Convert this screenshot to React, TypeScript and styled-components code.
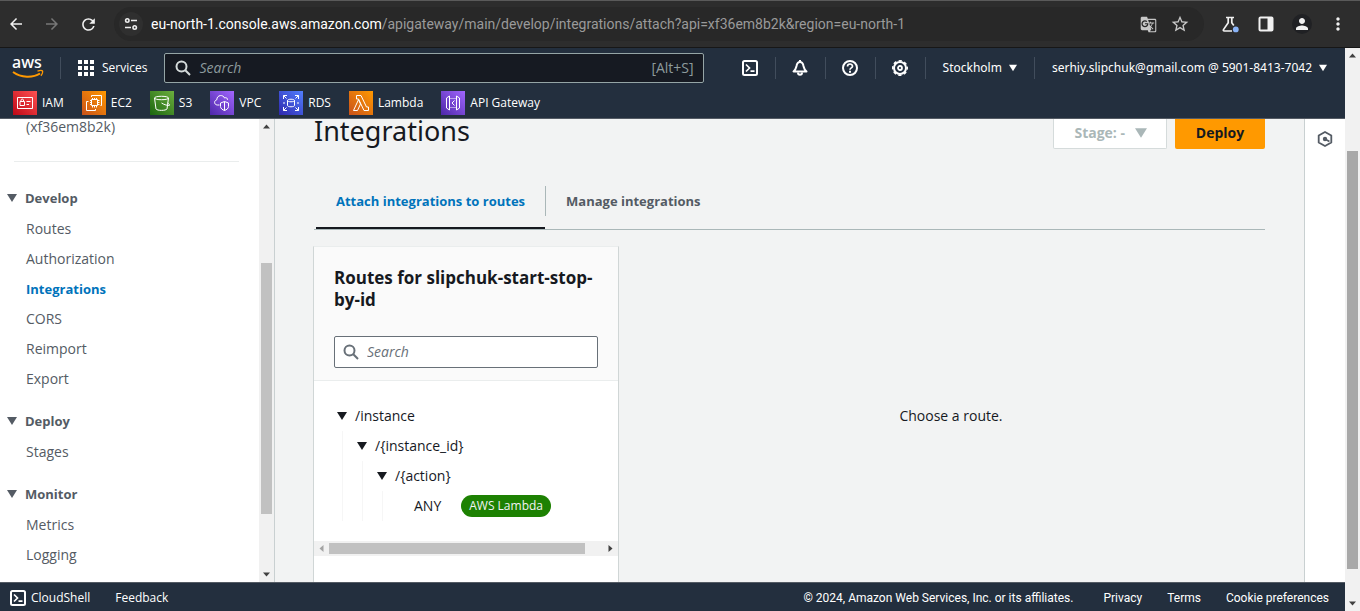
import React from "react";
import styled, { createGlobalStyle } from "styled-components";
import {
  MdArrowBack,
  MdArrowForward,
  MdGTranslate,
  MdMoreVert,
  MdPerson,
  MdRefresh,
  MdStarOutline,
} from "react-icons/md";

const Global = createGlobalStyle`
  * { box-sizing: border-box; }
  body {
    margin: 0;
    font-family: "Open Sans", "Noto Sans", sans-serif;
    font-size: 14px;
    line-height: 20px;
    color: #16191f;
    background: #f2f3f3;
  }
  button, input { font: inherit; color: inherit; }
  button { border: 0; padding: 0; background: none; cursor: pointer; }
  a { color: inherit; text-decoration: none; }
  h1, h2, h3, ul { margin: 0; padding: 0; font-size: inherit; }
  ul { list-style: none; }
  svg { display: block; flex: none; }
`;

const Screen = styled.div`
  display: flex;
  flex-direction: column;
  height: 100vh;
  overflow: hidden;
`;

/* Browser bar */

const BrowserBar = styled.div`
  display: flex;
  align-items: center;
  height: 48px;
  flex: none;
  padding: 0 12px 0 6px;
  background: #2d2d2d;
  border-top: 1px solid #5a5a5a;
  border-bottom: 1px solid #171717;
  color: #f1f1f1;
`;

const NavButtons = styled.div`
  display: flex;
  gap: 16px;
  margin-right: 16px;
`;

const BarButton = styled.button<{ $muted?: boolean; $round?: boolean }>`
  display: flex;
  align-items: center;
  justify-content: center;
  width: 20px;
  height: 20px;
  border-radius: 10px;
  color: ${(p) => (p.$muted ? "#777" : "#f1f1f1")};
  background: ${(p) => (p.$round ? "#202124" : "none")};
`;

const AddressBar = styled.div`
  display: flex;
  align-items: center;
  flex: 1;
  min-width: 0;
  height: 34px;
  padding: 0 14px 0 5px;
  border-radius: 17px;
  background: #282828;
`;

const SiteInfo = styled.button`
  display: flex;
  align-items: center;
  justify-content: center;
  width: 24px;
  height: 24px;
  margin-right: 8px;
  border-radius: 12px;
  background: #2f2f2f;
`;

const Url = styled.div`
  flex: 1;
  overflow: hidden;
  white-space: nowrap;
  color: #9a9a9a;
  font-family: Roboto, "Noto Sans", sans-serif;
  outline: 0;
  b { font-weight: 400; color: #fff; }
`;

const AddressActions = styled.div`
  display: flex;
  gap: 12px;
  color: #c7c7c7;
`;

const BarActions = styled.div`
  display: flex;
  gap: 16px;
  margin-left: 16px;
`;

/* Frame */

const Viewport = styled.div`
  display: flex;
  flex: 1;
  min-height: 0;
`;

const Console = styled.div`
  display: flex;
  flex-direction: column;
  flex: 1;
  min-width: 0;
`;

const Header = styled.header`
  flex: none;
  background: #232f3e;
  border-bottom: 1px solid #545b64;
  color: #fff;
  font-size: 12px;
`;

const HeaderRow = styled.div`
  display: flex;
  align-items: center;
  height: 40px;
  padding: 0 18px 0 12px;
`;

const LogoLink = styled.a`
  display: block;
  padding-right: 16px;
`;

const ServicesButton = styled.button`
  display: flex;
  align-items: center;
  gap: 8px;
  height: 22px;
  margin-right: 17px;
  padding-left: 17px;
  border-left: 1px solid #414d5c;
`;

const HeaderSearch = styled.label`
  display: flex;
  align-items: center;
  flex: 1;
  height: 30px;
  margin-right: 21px;
  padding: 0 9px 0 10px;
  border: 1px solid #95a5a6;
  border-radius: 2px;
  background: #161a22;
  color: #8d9a9d;
  font-size: 14px;
`;

const SearchInput = styled.input`
  flex: 1;
  width: 100%;
  min-width: 0;
  height: 20px;
  margin-left: 8px;
  padding: 0;
  border: 0;
  outline: 0;
  background: transparent;
  &::placeholder { color: inherit; opacity: 1; font-style: italic; }
`;

const HeaderIcon = styled.button<{ $first?: boolean }>`
  display: flex;
  align-items: center;
  justify-content: center;
  width: 50px;
  height: 22px;
  border-left: ${(p) => (p.$first ? "0" : "1px solid #414d5c")};
`;

const HeaderMenu = styled.button`
  display: flex;
  align-items: center;
  gap: 7px;
  height: 22px;
  padding: 0 0 0 17px;
  white-space: nowrap;
  font-family: "Noto Sans", sans-serif;
  border-left: 1px solid #414d5c;
  & + & { margin-left: 17px; }
`;

const Favorites = styled.nav`
  display: flex;
  align-items: center;
  gap: 18px;
  height: 30px;
  padding: 0 13px;
`;

const Favorite = styled.a`
  display: flex;
  align-items: center;
  gap: 5px;
`;

const Tile = styled.span<{ $from: string; $to: string }>`
  display: block;
  width: 24px;
  height: 24px;
  background: linear-gradient(45deg, ${(p) => p.$from}, ${(p) => p.$to});
`;

const Body = styled.div`
  display: flex;
  flex: 1;
  min-height: 0;
  overflow: hidden;
`;

/* Sidebar */

const Sidebar = styled.aside`
  display: flex;
  flex: none;
  width: 275px;
  background: #fff;
  border-right: 1px solid #c9d0d1;
  overflow: hidden;
`;

const SideContent = styled.nav`
  flex: 1;
  color: #545b64;
`;

const ApiId = styled.div`
  height: 42px;
  line-height: 16px;
  padding-left: 26px;
`;

const Divider = styled.hr`
  height: 1px;
  margin: 0 20px 26px 14px;
  border: 0;
  background: #eaeded;
`;

const SectionTitle = styled.button`
  display: flex;
  align-items: center;
  gap: 8px;
  height: 20px;
  margin-bottom: 6px;
  padding-left: 7px;
  font-size: 13px;
  font-weight: 700;
`;

const SectionList = styled.ul`
  margin-bottom: 17px;
`;

const SideLink = styled.a<{ $active?: boolean }>`
  display: block;
  padding-left: 26px;
  font-size: ${(p) => (p.$active ? 13 : 14)}px;
  line-height: 30px;
  font-weight: ${(p) => (p.$active ? 700 : 400)};
  color: ${(p) => (p.$active ? "#0073bb" : "#545b64")};
`;

/* Main area */

const Main = styled.main`
  display: flex;
  flex-direction: column;
  flex: 1;
  min-width: 0;
  padding: 0 39px 0 38px;
`;

const TitleRow = styled.div`
  display: flex;
  flex: none;
  gap: 8px;
  height: 30px;
  padding-left: 1px;
`;

const Title = styled.h1`
  flex: 1;
  font-family: "Noto Sans", sans-serif;
  font-size: 27px;
  line-height: 24px;
  font-weight: 400;
`;

const StageButton = styled.button`
  display: flex;
  align-items: center;
  gap: 10px;
  padding: 0 19px 2px 20px;
  border: 1px solid #d5dbdb;
  border-top: 0;
  border-radius: 0 0 2px 2px;
  background: #fff;
  color: #aab7b8;
  font-size: 14px;
  font-weight: 700;
`;

const DeployButton = styled.button`
  width: 90px;
  padding-bottom: 2px;
  border-radius: 0 0 2px 2px;
  background: #ff9900;
  font-size: 14px;
  font-weight: 700;
`;

const Tabs = styled.div`
  display: flex;
  align-items: flex-start;
  flex: none;
  height: 45px;
  margin: 36px 0 16px 1px;
  padding-left: 2px;
  border-bottom: 1px solid #aab7b8;
`;

const Tab = styled.button<{ $active?: boolean }>`
  height: 44px;
  padding: 0 20px 10px;
  font-size: 13px;
  font-weight: 700;
  color: ${(p) => (p.$active ? "#0073bb" : "#545b64")};
  border-bottom: 2px solid ${(p) => (p.$active ? "#16191f" : "transparent")};
`;

const TabRule = styled.span`
  width: 1px;
  height: 30px;
  margin-top: 1px;
  background: #aab7b8;
`;

const Columns = styled.div`
  display: flex;
  flex: 1;
  gap: 18px;
  min-height: 0;
`;

const Card = styled.section`
  flex: none;
  width: 306px;
  border: 1px solid #d0d6d6;
  border-top-color: #eaeded;
  border-bottom: 0;
  background: #fff;
`;

const CardHeader = styled.div`
  padding: 20px 20px 12px;
  background: #fafafa;
  border-bottom: 1px solid #eaeded;
`;

const CardTitle = styled.h2`
  font-size: 17px;
  line-height: 22px;
  font-weight: 700;
  margin-bottom: 25px;
`;

const RouteSearch = styled.label`
  display: flex;
  align-items: center;
  height: 32px;
  padding: 0 8px;
  border: 1px solid #687078;
  border-radius: 2px;
  background: #fff;
  color: #687078;
  font-size: 14px;
`;

const Tree = styled.div`
  padding: 20px;
`;

const Branch = styled.ul<{ $nested?: boolean }>`
  margin-left: ${(p) => (p.$nested ? 5 : 0)}px;
  padding-left: ${(p) => (p.$nested ? 14 : 3)}px;
  border-left: ${(p) => (p.$nested ? "1px solid #f6f6f6" : "0")};
`;

const Node = styled.button`
  display: flex;
  align-items: center;
  gap: 8px;
  height: 30px;
`;

const Method = styled.a`
  display: flex;
  align-items: center;
  gap: 20px;
  height: 30px;
  padding-left: 17px;
`;

const Badge = styled.span`
  padding: 0 8px;
  border-radius: 11px;
  line-height: 22px;
  background: #1d8102;
  color: #f2f3f3;
  font-size: 12px;
`;

const Placeholder = styled.p`
  flex: 1;
  margin: 0;
  padding-top: 160px;
  text-align: center;
`;

const ToolsPanel = styled.aside`
  display: flex;
  flex-direction: column;
  align-items: center;
  width: 41px;
  padding-top: 12px;
  background: #fff;
  border-left: 1px solid #c9d0d1;
  color: #545b64;
`;

/* Footer */

const Footer = styled.footer`
  display: flex;
  align-items: center;
  justify-content: space-between;
  flex: none;
  height: 29px;
  padding: 2px 16px 0 10px;
  background: #232f3e;
  border-top: 1px solid #545b64;
  color: #fff;
  font-size: 12px;
  white-space: nowrap;
`;

const FooterGroup = styled.div<{ $legal?: boolean }>`
  display: flex;
  align-items: center;
  gap: 25px;
  font-family: ${(p) => (p.$legal ? 'Roboto, "Noto Sans", sans-serif' : "inherit")};
`;

const ShellButton = styled.button`
  display: flex;
  align-items: center;
  gap: 5px;
`;

const Legal = styled.span`
  padding-right: 5px;
`;

/* Scroll bars */

const BarTrack = styled.div<{ $horizontal?: boolean }>`
  display: flex;
  flex-direction: ${(p) => (p.$horizontal ? "row" : "column")};
  flex: none;
  width: ${(p) => (p.$horizontal ? "auto" : "15px")};
  height: ${(p) => (p.$horizontal ? "15px" : "auto")};
  background: #f1f1f1;
`;

const BarArrow = styled.span<{ $dim?: boolean }>`
  display: flex;
  align-items: center;
  justify-content: center;
  flex: none;
  width: 15px;
  height: 15px;
  color: ${(p) => (p.$dim ? "#a3a3a3" : "#404040")};
`;

const BarSpace = styled.span<{ $size: number }>`
  flex: ${(p) => p.$size} 1 0;
`;

const BarThumb = styled.span<{ $size: number; $horizontal?: boolean; $dark?: boolean }>`
  flex: ${(p) => p.$size} 1 0;
  margin: ${(p) => (p.$horizontal ? "2px 0" : "0 2px")};
  background: ${(p) => (p.$dark ? "#a8a8a8" : "#c1c1c1")};
`;

type ScrollProps = {
  before: number;
  thumb: number;
  after: number;
  horizontal?: boolean;
  dark?: boolean;
};

function ScrollBar({ before, thumb, after, horizontal, dark }: ScrollProps) {
  return (
    <BarTrack $horizontal={horizontal} aria-hidden="true">
      <BarArrow $dim={before === 0}>
        <svg width="7" height="7" viewBox="0 0 7 7" fill="currentColor">
          <path d={horizontal ? "M5.500 0v7L1.500 3.500z" : "M0 5.500h7L3.500 1.500z"} />
        </svg>
      </BarArrow>
      <BarSpace $size={before} />
      <BarThumb $size={thumb} $horizontal={horizontal} $dark={dark} />
      <BarSpace $size={after} />
      <BarArrow>
        <svg width="7" height="7" viewBox="0 0 7 7" fill="currentColor">
          <path d={horizontal ? "M1.500 0v7l4-3.500z" : "M0 1.500h7L3.500 5.500z"} />
        </svg>
      </BarArrow>
    </BarTrack>
  );
}

/* Icons */

const Caret = ({ size = 10 }: { size?: number }) => (
  <svg width={size} height={size} viewBox="0 0 10 10" fill="currentColor">
    <path d="M0 1h10L5 9z" />
  </svg>
);

const Magnifier = ({ color }: { color: string }) => (
  <svg width="16" height="16" viewBox="0 0 16 16" fill="none" stroke={color} strokeWidth="2">
    <circle cx="6.500" cy="6.500" r="5" />
    <path d="M10.300 10.300 15 15" />
  </svg>
);

const AwsLogo = () => (
  <svg width="32" height="34" viewBox="0 -5 32 34">
    <text x="0" y="12" fontSize="16" fontFamily="Noto Sans, sans-serif" fontWeight="500" fill="#fff">aws</text>
    <path d="M1 16c8 6 20 6 27 1.500" fill="none" stroke="#f90" strokeWidth="2" />
    <path d="M25.500 15.200c2-.8 4.500-.9 5-.2s-.2 3.300-1.600 4.800" fill="none" stroke="#f90" strokeWidth="1.300" />
  </svg>
);

const Grid = () => (
  <svg width="16" height="16" viewBox="0 0 16 16" fill="#fff">
    {[0, 6, 12].map((y) =>
      [0, 6, 12].map((x) => <rect key={`${x}-${y}`} x={x} y={y} width="4" height="4" />)
    )}
  </svg>
);

const Terminal = () => (
  <svg width="16" height="16" viewBox="0 0 16 16" fill="none" stroke="#fff" strokeWidth="2">
    <rect x="1" y="1" width="14" height="14" rx="1.500" />
    <path d="m4 4.500 3.500 3.500L4 11.500M8.500 11.200h4" strokeWidth="1.700" />
  </svg>
);

const Bell = () => (
  <svg width="16" height="16" viewBox="0 0 16 16" fill="none" stroke="#fff" strokeWidth="2" strokeLinejoin="round">
    <path d="M1.500 11.500h13C12 9.500 12 8 11.500 6 11 3.200 10 2 8 2S5 3.200 4.500 6C4 8 4 9.500 1.500 11.500z" />
    <path d="M8 0v2" />
    <path d="M6 12.500c0 3 4 3 4 0" />
  </svg>
);

const Help = () => (
  <svg width="16" height="16" viewBox="0 0 16 16" fill="none" stroke="#fff" strokeWidth="2">
    <circle cx="8" cy="8" r="7" />
    <path d="M5.500 6.500C5.500 3.200 10.500 3.300 10.500 6.200 10.500 7.900 8 7.800 8 9.700" strokeWidth="1.700" />
    <path d="M8 10.800v2" />
  </svg>
);

const Gear = () => (
  <svg width="16" height="16" viewBox="0 0 16 16" fill="none" stroke="#fff">
    <circle cx="8" cy="8" r="6" strokeWidth="2" />
    <circle cx="8" cy="8" r="7.300" strokeWidth="1.400" strokeDasharray="3.300 2.433" strokeDashoffset="1.600" />
    <circle cx="8" cy="8" r="2" strokeWidth="1.800" />
  </svg>
);

const Hexagon = () => (
  <svg width="16" height="16" viewBox="0 0 16 16" fill="none" stroke="currentColor" strokeWidth="1.800">
    <path d="M8 1 14.300 4.500v7L8 15 1.700 11.500v-7z" strokeLinejoin="round" />
    <circle cx="8" cy="8" r="2.200" fill="currentColor" stroke="none" />
    <path d="m8 8 4.400 2.500" strokeWidth="1.800" />
  </svg>
);

const Tune = () => (
  <svg width="14" height="14" viewBox="0 0 14 14" fill="none" stroke="#eee" strokeWidth="1.600">
    <circle cx="3.300" cy="3.500" r="1.700" />
    <path d="M7 3.500h6M1 10.500h6" />
    <circle cx="10.700" cy="10.500" r="1.700" />
  </svg>
);

const Flask = () => (
  <svg width="18" height="18" viewBox="0 0 18 18" fill="none" stroke="#f1f1f1" strokeWidth="1.700">
    <path d="M5 2.500h8M7.200 2.500v5.300L2.500 14.600q-.6 1.400.8 1.400H11M10.800 2.500v5.300l2 2.600" />
    <circle cx="14.800" cy="14.400" r="2.900" fill="#8ab4f8" stroke="none" />
  </svg>
);

const SidePanel = () => (
  <svg width="16" height="16" viewBox="0 0 16 16">
    <rect x="1.500" y="1.500" width="13" height="13" rx="1" fill="none" stroke="#f1f1f1" strokeWidth="2" />
    <path d="M9.500 2h5v12h-5z" fill="#f1f1f1" />
  </svg>
);

const services = [
  {
    name: "IAM", from: "#bd0816", to: "#ff5252",
    art: <path d="M4.500 6.500h15v11h-15zM7 10.500h4.500v4H7zM8 10.500V9a1.300 1.300 0 0 1 2.500 0v1.500M13.500 10.500h4M13.500 13.500h2.500" />,
  },
  {
    name: "EC2", from: "#c8511b", to: "#ff9900",
    art: <path d="M9.500 8.500h6v6h-6zM10.500 7v1M12.500 7v1M14.500 7v1M10.500 15v1.500M12.500 15v1.500M14.500 15v1.500M8 9.500h1M8 11.500h1M8 13.500h1M16 9.500h1.500M16 11.500h1.500M16 13.500h1.500M9.500 6V4.500h10v10H18.500M6.500 10.500h-2v9h9V18" />,
  },
  {
    name: "S3", from: "#1b660f", to: "#6cae3e",
    art: <path d="M4.500 7c0-2.300 14-2.300 14 0s-14 2.300-14 0zl1.500 11c1 1.800 10 1.800 11 0l1.500-11M11.500 12c2 1.500 7 3 8 2.300.5-.7-.7-1.500-2-2.300" />,
  },
  {
    name: "VPC", from: "#4d27a8", to: "#a166ff",
    art: <path d="M9.500 14H7.300c-3.500-.3-3.500-4.500-.5-5.200C6.800 3.500 13.500 3.500 14.500 7c2-1 3 .4 3 1.800M14.500 10.500l4 1.500v3.500c0 2-2 3.300-4 4-2-.7-4-2-4-4V12zM14.500 10.500v9" />,
  },
  {
    name: "RDS", from: "#2e27ad", to: "#527fff",
    art: <path d="M8.500 9.500c0-1.700 7-1.700 7 0s-7 1.700-7 0zv5c0 1.700 7 1.700 7 0v-5M4.500 8V4.500H8M4.500 4.500l3 3M16 4.500h3.500V8M19.500 4.500l-3 3M4.500 16v3.500H8M4.500 19.500l3-3M16 19.500h3.500V16M19.500 19.500l-3-3M4 12h2M18 12h2" />,
  },
  {
    name: "Lambda", from: "#c8511b", to: "#ff9900",
    art: <path d="M4.500 19.500h4l3-6.500-2-4.300zM7.500 4.500V8h2l5.500 11.500h4.500V16h-2L12 4.500z" />,
  },
  {
    name: "API Gateway", from: "#4d27a8", to: "#a166ff",
    art: (
      <>
        <path d="M5.500 7 8.500 5v14l-3-2zM18.500 7l-3-2v14l3-2zM13.500 9.500 11 12l2.500 2.500" />
        <path d="M8.500 7.500h7M8.500 16.500h7" strokeDasharray="1 1" />
      </>
    ),
  },
];

const sections = [
  { title: "Develop", items: ["Routes", "Authorization", "Integrations", "CORS", "Reimport", "Export"] },
  { title: "Deploy", items: ["Stages"] },
  { title: "Monitor", items: ["Metrics", "Logging"] },
];

export default function App() {
  return (
    <Screen>
      <Global />
      <BrowserBar>
        <NavButtons>
          <BarButton aria-label="Back"><MdArrowBack size={18} /></BarButton>
          <BarButton $muted aria-label="Forward"><MdArrowForward size={18} /></BarButton>
          <BarButton aria-label="Reload"><MdRefresh size={19} /></BarButton>
        </NavButtons>
        <AddressBar>
          <SiteInfo aria-label="Site information"><Tune /></SiteInfo>
          <Url role="textbox" aria-label="Address" contentEditable suppressContentEditableWarning spellCheck={false}>
            <b>eu-north-1.console.aws.amazon.com</b>/apigateway/main/develop/integrations/attach?api=xf36em8b2k&amp;region=eu-north-1
          </Url>
          <AddressActions>
            <BarButton aria-label="Translate"><MdGTranslate size={17} color="#c7c7c7" /></BarButton>
            <BarButton aria-label="Bookmark"><MdStarOutline size={20} color="#c7c7c7" /></BarButton>
          </AddressActions>
        </AddressBar>
        <BarActions>
          <BarButton aria-label="Experiments"><Flask /></BarButton>
          <BarButton aria-label="Side panel"><SidePanel /></BarButton>
          <BarButton $round aria-label="Profile"><MdPerson size={18} /></BarButton>
          <BarButton aria-label="Menu"><MdMoreVert size={20} /></BarButton>
        </BarActions>
      </BrowserBar>

      <Viewport>
        <Console>
          <Header>
            <HeaderRow>
              <LogoLink href="#" aria-label="AWS home"><AwsLogo /></LogoLink>
              <ServicesButton><Grid />Services</ServicesButton>
              <HeaderSearch>
                <Magnifier color="#d5dbdb" />
                <SearchInput type="text" placeholder="Search" aria-label="Search services" />
                <span>[Alt+S]</span>
              </HeaderSearch>
              <HeaderIcon $first aria-label="CloudShell"><Terminal /></HeaderIcon>
              <HeaderIcon aria-label="Notifications"><Bell /></HeaderIcon>
              <HeaderIcon aria-label="Help"><Help /></HeaderIcon>
              <HeaderIcon aria-label="Settings"><Gear /></HeaderIcon>
              <HeaderMenu>Stockholm<Caret size={8} /></HeaderMenu>
              <HeaderMenu>serhiy.slipchuk@gmail.com @ 5901-8413-7042<Caret size={8} /></HeaderMenu>
            </HeaderRow>
            <Favorites>
              {services.map((s) => (
                <Favorite href="#" key={s.name}>
                  <Tile $from={s.from} $to={s.to}>
                    <svg width="24" height="24" viewBox="0 0 24 24" fill="none" stroke="#fff">{s.art}</svg>
                  </Tile>
                  {s.name}
                </Favorite>
              ))}
            </Favorites>
          </Header>

          <Body>
            <Sidebar>
              <SideContent>
                <ApiId>(xf36em8b2k)</ApiId>
                <Divider />
                {sections.map((section) => (
                  <React.Fragment key={section.title}>
                    <SectionTitle><Caret />{section.title}</SectionTitle>
                    <SectionList>
                      {section.items.map((item) => (
                        <li key={item}>
                          <SideLink href="#" $active={item === "Integrations"}>{item}</SideLink>
                        </li>
                      ))}
                    </SectionList>
                  </React.Fragment>
                ))}
              </SideContent>
              <ScrollBar before={129} thumb={251} after={53} />
            </Sidebar>

            <Main>
              <TitleRow>
                <Title>Integrations</Title>
                <StageButton disabled>Stage: -<Caret size={12} /></StageButton>
                <DeployButton>Deploy</DeployButton>
              </TitleRow>
              <Tabs role="tablist">
                <Tab $active role="tab" aria-selected="true">Attach integrations to routes</Tab>
                <TabRule />
                <Tab role="tab" aria-selected="false">Manage integrations</Tab>
              </Tabs>
              <Columns>
                <Card>
                  <CardHeader>
                    <CardTitle>Routes for slipchuk-start-stop-by-id</CardTitle>
                    <RouteSearch>
                      <Magnifier color="#687078" />
                      <SearchInput type="text" placeholder="Search" aria-label="Search routes" />
                    </RouteSearch>
                  </CardHeader>
                  <Tree>
                    <Branch>
                      <li>
                        <Node><Caret />/instance</Node>
                        <Branch $nested>
                          <li>
                            <Node><Caret />{"/{instance_id}"}</Node>
                            <Branch $nested>
                              <li>
                                <Node><Caret />{"/{action}"}</Node>
                                <Branch $nested>
                                  <li><Method href="#">ANY<Badge>AWS Lambda</Badge></Method></li>
                                </Branch>
                              </li>
                            </Branch>
                          </li>
                        </Branch>
                      </li>
                    </Branch>
                  </Tree>
                  <ScrollBar horizontal before={0} thumb={256} after={18} />
                </Card>
                <Placeholder>Choose a route.</Placeholder>
              </Columns>
            </Main>

            <ToolsPanel>
              <button aria-label="Open tools"><Hexagon /></button>
            </ToolsPanel>
          </Body>

          <Footer>
            <FooterGroup>
              <ShellButton><Terminal />CloudShell</ShellButton>
              <button>Feedback</button>
            </FooterGroup>
            <FooterGroup $legal>
              <Legal>© 2024, Amazon Web Services, Inc. or its affiliates.</Legal>
              <a href="#">Privacy</a>
              <a href="#">Terms</a>
              <a href="#">Cookie preferences</a>
            </FooterGroup>
          </Footer>
        </Console>
        <ScrollBar dark before={88} thumb={418} after={27} />
      </Viewport>
    </Screen>
  );
}
